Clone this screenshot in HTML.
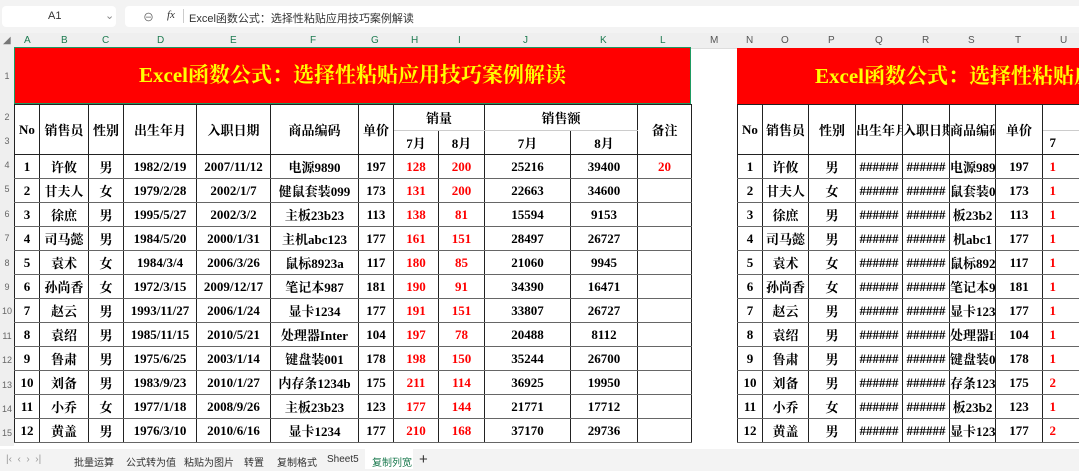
<!DOCTYPE html><html><head><meta charset="utf-8"><style>
body{margin:0;width:1079px;height:471px;overflow:hidden;background:#fff;position:relative;font-family:"Liberation Serif","Noto Serif CJK SC",serif}
.a{position:absolute}
.top{left:0;top:0;width:1079px;height:33px;background:#f3f3f3}
.nb{left:2px;top:6px;width:114px;height:21px;background:#fff;border-radius:4px;font:11px "Liberation Sans",sans-serif;color:#333}
.fb{left:125px;top:6px;width:960px;height:21px;background:#fff;border-radius:4px;font:11px "Liberation Sans","Noto Sans CJK SC",sans-serif;color:#333}
.ch{top:33px;height:15px;background:#efefef;font:10px "Liberation Sans",sans-serif;color:#555;text-align:center;line-height:15px;border-bottom:1px solid #ddd}
.rh{left:0;width:14px;background:#efefef;font:9px "Liberation Sans",sans-serif;color:#666;text-align:center}
table{position:absolute;border-collapse:collapse;table-layout:fixed;font-weight:bold;font-size:13px}
td{border:1px solid #222;text-align:center;padding:0;white-space:nowrap;overflow:hidden;height:23px}
tr.d td{border-top-color:#666;border-bottom-color:#666}
.r{color:#f00}
.tabs{left:0;top:449px;width:1079px;height:22px;background:#f3f3f3;font:10px "Liberation Sans","Noto Sans CJK SC",sans-serif;color:#333}
.tabs span{position:absolute;top:5px}
</style></head><body>
<div class="a top"></div>
<div class="a nb"><span class="a" style="left:46px;top:4px">A1</span><span class="a" style="left:103px;top:3px;color:#888">⌄</span></div>
<div class="a fb"><span class="a" style="left:18px;top:3px;color:#666">⊖</span><span class="a" style="left:42px;top:3px;font-style:italic;font-family:'Liberation Serif'">fx</span><span class="a" style="left:58px;top:3px;width:1px;height:14px;background:#ccc"></span><span class="a" style="left:64px;top:4px">Excel函数公式：选择性粘贴应用技巧案例解读</span></div>
<div class="a ch" style="left:0;width:1079px"></div>
<div class="a" style="left:0;top:33px;width:1079px;font:10px 'Liberation Sans',sans-serif;color:#555;line-height:15px">
<span class="a" style="left:3px;color:#777">◢</span>
<span class="a" style="left:24px;color:#1b7a4f">A</span><span class="a" style="left:61px;color:#1b7a4f">B</span><span class="a" style="left:102px;color:#1b7a4f">C</span><span class="a" style="left:157px;color:#1b7a4f">D</span><span class="a" style="left:230px;color:#1b7a4f">E</span><span class="a" style="left:310px;color:#1b7a4f">F</span><span class="a" style="left:371px;color:#1b7a4f">G</span><span class="a" style="left:411px;color:#1b7a4f">H</span><span class="a" style="left:458px;color:#1b7a4f">I</span><span class="a" style="left:523px;color:#1b7a4f">J</span><span class="a" style="left:600px;color:#1b7a4f">K</span><span class="a" style="left:660px;color:#1b7a4f">L</span><span class="a" style="left:710px">M</span><span class="a" style="left:746px">N</span><span class="a" style="left:781px">O</span><span class="a" style="left:828px">P</span><span class="a" style="left:875px">Q</span><span class="a" style="left:922px">R</span><span class="a" style="left:968px">S</span><span class="a" style="left:1015px">T</span><span class="a" style="left:1060px">U</span>
</div>
<div class="a rh" style="top:48px;height:398px"></div>
<div class="a" style="left:0;top:48px;width:14px;font:9px 'Liberation Sans',sans-serif;color:#666;text-align:center">
<div style="height:56px;line-height:56px">1</div><div style="height:26px;line-height:26px">2</div><div style="height:23px;line-height:23px">3</div>
<div style="height:24.4px;line-height:24px">4</div><div style="height:24.4px;line-height:24px">5</div><div style="height:24.4px;line-height:24px">6</div><div style="height:24.4px;line-height:24px">7</div><div style="height:24.4px;line-height:24px">8</div><div style="height:24.4px;line-height:24px">9</div><div style="height:24.4px;line-height:24px">10</div><div style="height:24.4px;line-height:24px">11</div><div style="height:24.4px;line-height:24px">12</div><div style="height:24.4px;line-height:24px">13</div><div style="height:24.4px;line-height:24px">14</div><div style="height:24.4px;line-height:24px">15</div></div>

<div class="a" style="left:14px;top:47px;width:677px;height:57px;background:#f00;border:1px solid #1e9a62;box-sizing:border-box;color:#ff0;font-weight:bold;font-size:21px;text-align:center;line-height:55px">Excel函数公式：选择性粘贴应用技巧案例解读</div>
<div class="a" style="left:737px;top:48px;width:345px;height:56px;background:#f00;color:#ff0;font-weight:bold;font-size:21px;line-height:56px;white-space:nowrap;overflow:hidden"><span style="position:absolute;left:78px">Excel函数公式：选择性粘贴应用技巧案例解读</span></div>

<table style="left:14px;top:104px;width:677px">
<colgroup><col style="width:25px"><col style="width:49px"><col style="width:35px"><col style="width:73px"><col style="width:74px"><col style="width:88px"><col style="width:35px"><col style="width:45px"><col style="width:46px"><col style="width:86px"><col style="width:67px"><col style="width:54px"></colgroup>
<tr style="height:26px"><td rowspan=2>No</td><td rowspan=2>销售员</td><td rowspan=2>性别</td><td rowspan=2>出生年月</td><td rowspan=2>入职日期</td><td rowspan=2>商品编码</td><td rowspan=2>单价</td><td colspan=2 style="border-bottom-color:#ccc">销量</td><td colspan=2 style="border-bottom-color:#ccc">销售额</td><td rowspan=2>备注</td></tr>
<tr style="height:23px"><td>7月</td><td>8月</td><td>7月</td><td>8月</td></tr>
<tr class=d><td>1</td><td>许攸</td><td>男</td><td>1982/2/19</td><td>2007/11/12</td><td>电源9890</td><td>197</td><td class=r>128</td><td class=r>200</td><td>25216</td><td>39400</td><td class=r>20</td></tr>
<tr class=d><td>2</td><td>甘夫人</td><td>女</td><td>1979/2/28</td><td>2002/1/7</td><td>健鼠套装099</td><td>173</td><td class=r>131</td><td class=r>200</td><td>22663</td><td>34600</td><td></td></tr>
<tr class=d><td>3</td><td>徐庶</td><td>男</td><td>1995/5/27</td><td>2002/3/2</td><td>主板23b23</td><td>113</td><td class=r>138</td><td class=r>81</td><td>15594</td><td>9153</td><td></td></tr>
<tr class=d><td>4</td><td>司马懿</td><td>男</td><td>1984/5/20</td><td>2000/1/31</td><td>主机abc123</td><td>177</td><td class=r>161</td><td class=r>151</td><td>28497</td><td>26727</td><td></td></tr>
<tr class=d><td>5</td><td>袁术</td><td>女</td><td>1984/3/4</td><td>2006/3/26</td><td>鼠标8923a</td><td>117</td><td class=r>180</td><td class=r>85</td><td>21060</td><td>9945</td><td></td></tr>
<tr class=d><td>6</td><td>孙尚香</td><td>女</td><td>1972/3/15</td><td>2009/12/17</td><td>笔记本987</td><td>181</td><td class=r>190</td><td class=r>91</td><td>34390</td><td>16471</td><td></td></tr>
<tr class=d><td>7</td><td>赵云</td><td>男</td><td>1993/11/27</td><td>2006/1/24</td><td>显卡1234</td><td>177</td><td class=r>191</td><td class=r>151</td><td>33807</td><td>26727</td><td></td></tr>
<tr class=d><td>8</td><td>袁绍</td><td>男</td><td>1985/11/15</td><td>2010/5/21</td><td>处理器Inter</td><td>104</td><td class=r>197</td><td class=r>78</td><td>20488</td><td>8112</td><td></td></tr>
<tr class=d><td>9</td><td>鲁肃</td><td>男</td><td>1975/6/25</td><td>2003/1/14</td><td>键盘装001</td><td>178</td><td class=r>198</td><td class=r>150</td><td>35244</td><td>26700</td><td></td></tr>
<tr class=d><td>10</td><td>刘备</td><td>男</td><td>1983/9/23</td><td>2010/1/27</td><td>内存条1234b</td><td>175</td><td class=r>211</td><td class=r>114</td><td>36925</td><td>19950</td><td></td></tr>
<tr class=d><td>11</td><td>小乔</td><td>女</td><td>1977/1/18</td><td>2008/9/26</td><td>主板23b23</td><td>123</td><td class=r>177</td><td class=r>144</td><td>21771</td><td>17712</td><td></td></tr>
<tr class=d><td>12</td><td>黄盖</td><td>男</td><td>1976/3/10</td><td>2010/6/16</td><td>显卡1234</td><td>177</td><td class=r>210</td><td class=r>168</td><td>37170</td><td>29736</td><td></td></tr>
</table>

<table style="left:737px;top:104px;width:366px">
<colgroup><col style="width:25px"><col style="width:46px"><col style="width:47px"><col style="width:47px"><col style="width:47px"><col style="width:46px"><col style="width:47px"><col style="width:61px"></colgroup>
<tr style="height:26px"><td rowspan=2>No</td><td rowspan=2>销售员</td><td rowspan=2>性别</td><td rowspan=2>出生年月</td><td rowspan=2>入职日期</td><td rowspan=2>商品编码</td><td rowspan=2>单价</td><td style="border-bottom-color:#ccc"></td></tr>
<tr style="height:23px"><td style="text-align:left">&nbsp;&nbsp;7</td></tr>
<tr class=d><td>1</td><td>许攸</td><td>男</td><td>######</td><td>######</td><td>电源9890</td><td>197</td><td class=r style="text-align:left">&nbsp;&nbsp;1</td></tr>
<tr class=d><td>2</td><td>甘夫人</td><td>女</td><td>######</td><td>######</td><td>鼠套装0</td><td>173</td><td class=r style="text-align:left">&nbsp;&nbsp;1</td></tr>
<tr class=d><td>3</td><td>徐庶</td><td>男</td><td>######</td><td>######</td><td>板23b2</td><td>113</td><td class=r style="text-align:left">&nbsp;&nbsp;1</td></tr>
<tr class=d><td>4</td><td>司马懿</td><td>男</td><td>######</td><td>######</td><td>机abc1</td><td>177</td><td class=r style="text-align:left">&nbsp;&nbsp;1</td></tr>
<tr class=d><td>5</td><td>袁术</td><td>女</td><td>######</td><td>######</td><td>鼠标8923</td><td>117</td><td class=r style="text-align:left">&nbsp;&nbsp;1</td></tr>
<tr class=d><td>6</td><td>孙尚香</td><td>女</td><td>######</td><td>######</td><td>笔记本98</td><td>181</td><td class=r style="text-align:left">&nbsp;&nbsp;1</td></tr>
<tr class=d><td>7</td><td>赵云</td><td>男</td><td>######</td><td>######</td><td>显卡123</td><td>177</td><td class=r style="text-align:left">&nbsp;&nbsp;1</td></tr>
<tr class=d><td>8</td><td>袁绍</td><td>男</td><td>######</td><td>######</td><td>处理器Int</td><td>104</td><td class=r style="text-align:left">&nbsp;&nbsp;1</td></tr>
<tr class=d><td>9</td><td>鲁肃</td><td>男</td><td>######</td><td>######</td><td>键盘装00</td><td>178</td><td class=r style="text-align:left">&nbsp;&nbsp;1</td></tr>
<tr class=d><td>10</td><td>刘备</td><td>男</td><td>######</td><td>######</td><td>存条123</td><td>175</td><td class=r style="text-align:left">&nbsp;&nbsp;2</td></tr>
<tr class=d><td>11</td><td>小乔</td><td>女</td><td>######</td><td>######</td><td>板23b2</td><td>123</td><td class=r style="text-align:left">&nbsp;&nbsp;1</td></tr>
<tr class=d><td>12</td><td>黄盖</td><td>男</td><td>######</td><td>######</td><td>显卡123</td><td>177</td><td class=r style="text-align:left">&nbsp;&nbsp;2</td></tr>
</table>

<div class="a tabs"><span style="left:6px;color:#999">|‹ &nbsp;‹ &nbsp;› &nbsp;›|</span><span style="left:74px">批量运算</span><span style="left:126px">公式转为值</span><span style="left:184px">粘贴为图片</span><span style="left:244px">转置</span><span style="left:277px">复制格式</span><span style="left:327px">Sheet5</span><span class="a" style="left:365px;top:0;width:48px;height:20px;background:#fff"></span><span style="left:372px;color:#1b7a4f">复制列宽</span><span style="left:419px;top:2px;font-size:15px">+</span></div>
</body></html>
